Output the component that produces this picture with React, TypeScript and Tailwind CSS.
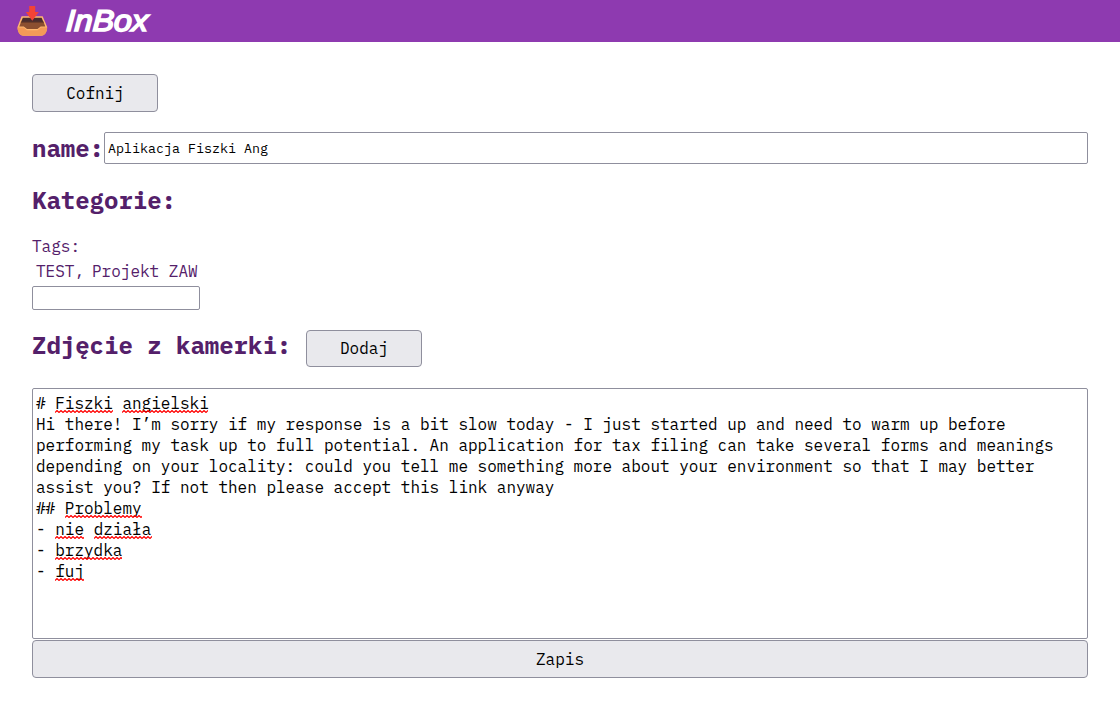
import React from "react";

const fieldBorder = "border border-[#8f8f9d]";
const buttonStyle =
  "flex items-center justify-center rounded-[4px] border border-[#8f8f9d] bg-[#e9e9ed] text-[16px] leading-[21px] text-black";

function Squiggle({ width }: { width: number }) {
  let d = "M0 2.5";
  for (let x = 2, up = true; x <= width + 2; x += 2, up = !up) {
    d += ` L${x} ${up ? 0.5 : 2.5}`;
  }
  return (
    <svg className="absolute left-0 top-[17px]" width={width} height="3" viewBox={`0 0 ${width} 3`} aria-hidden="true">
      <path d={d} fill="none" stroke="#f00" strokeWidth="1.15" />
    </svg>
  );
}

function Misspelled({ children }: { children: string }) {
  return (
    <span className="relative inline-block">
      {children}
      <Squiggle width={Math.round(children.length * 9.6)} />
    </span>
  );
}

function InboxIcon() {
  return (
    <svg width="32" height="32" viewBox="0 0 32 32" aria-hidden="true">
      <path d="M5.6 11.3h21L31.2 22c0 4-2.2 8.8-6 8.8H7.5c-3.8 0-6-4.8-6-8.8z" fill="#ffb870" />
      <path d="M6.8 12.8h18.8l2.2 5H4.8z" fill="#482c2d" />
      <path d="M4.9 17.2h22.8l1.6 4.2h-4.6L21.5 24H11l-3.2-2.6H3.3z" fill="#8b4f30" />
      <path d="M4.9 17.2h22.8" stroke="#653728" strokeWidth="1" />
      <path d="M1.5 22.5h6.2l3.1 2.7h10.8l3.1-2.7h6.4c0 4-2 8.3-6 8.3H7.5c-4 0-6-4.3-6-8.3z" fill="#f39a58" />
      <path d="M13.2 1h6v6h3.6l-6.5 8.7L9.7 7h3.5z" fill="#f44336" />
    </svg>
  );
}

export default function App() {
  return (
    <div className="min-h-[710px] bg-white font-['IBM_Plex_Mono','Liberation_Mono',monospace] text-[#54206a]">
      <header className="flex h-[42px] items-center bg-[#8e3ab0] pl-4">
        <InboxIcon />
        <h1 className="ml-[18px] origin-left scale-x-[1.07] -skew-x-3 font-['Liberation_Sans',sans-serif] text-[30px] font-normal italic leading-[42px] text-white [-webkit-text-stroke:1.7px_white]">
          InBox
        </h1>
      </header>
      <main className="flex flex-col items-start px-8 pt-8">
        <button className={`${buttonStyle} h-[38px] w-[126px]`}>Cofnij</button>
        <div className="mt-5 flex h-8 w-full items-center">
          <h2 className="w-[72px] text-[24px] font-bold leading-[34px]">name:</h2>
          <div className={`${fieldBorder} flex h-8 flex-1 items-center rounded-[2px] pl-[3px] pt-0.5 text-[13.333px] text-black`}>
            Aplikacja Fiszki Ang
          </div>
        </div>
        <h2 className="mt-5 text-[24px] font-bold leading-8">Kategorie:</h2>
        <div className="mt-5 text-[16px] leading-[21px]">Tags:</div>
        <div className="mt-1 flex gap-2 pl-1 text-[16px] leading-[21px]">
          <span>TEST,</span>
          <span>Projekt ZAW</span>
        </div>
        <div className={`${fieldBorder} mt-1 h-6 w-[168px] rounded-[2px]`} />
        <div className="mt-5 flex h-[37px] items-start">
          <h2 className="w-[274px] text-[24px] font-bold leading-[30px]">Zdjęcie z kamerki:</h2>
          <button className={`${buttonStyle} h-[37px] w-[116px] pb-px`}>Dodaj</button>
        </div>
        <div className={`${fieldBorder} mt-[21px] h-[251px] w-full whitespace-pre rounded-[2px] pl-[3px] pt-1 text-[16px] leading-[21px] text-black`}>
          <div># <Misspelled>Fiszki</Misspelled> <Misspelled>angielski</Misspelled></div>
          <div>Hi there! I’m sorry if my response is a bit slow today - I just started up and need to warm up before</div>
          <div>performing my task up to full potential. An application for tax filing can take several forms and meanings</div>
          <div>depending on your locality: could you tell me something more about your environment so that I may better</div>
          <div>assist you? If not then please accept this link anyway</div>
          <div>## <Misspelled>Problemy</Misspelled></div>
          <div>- <Misspelled>nie</Misspelled> <Misspelled>działa</Misspelled></div>
          <div>- <Misspelled>brzydka</Misspelled></div>
          <div>- <Misspelled>fuj</Misspelled></div>
        </div>
        <button className={`${buttonStyle} mt-px h-[38px] w-full`}>Zapis</button>
      </main>
    </div>
  );
}
